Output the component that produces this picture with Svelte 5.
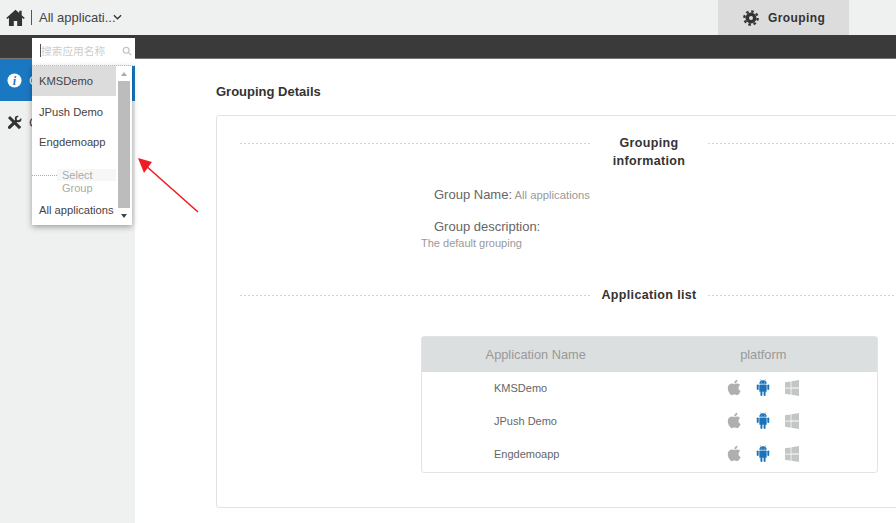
<script>
	const apps = ['KMSDemo', 'JPush Demo', 'Engdemoapp'];
</script>

{#snippet apple()}
	<svg class="pf" viewBox="3.5 3 16.5 18" fill="#aeb0b0"><path d="M17.05 20.28c-.98.95-2.05.8-3.08.35-1.09-.46-2.09-.48-3.24 0-1.44.62-2.2.44-3.06-.35C2.79 15.25 3.51 7.59 9.05 7.31c1.35.07 2.29.74 3.08.8 1.18-.24 2.31-.93 3.57-.84 1.51.12 2.65.72 3.4 1.8-3.12 1.87-2.38 5.98.48 7.13-.57 1.5-1.31 2.99-2.54 4.09zM12.03 7.25c-.15-2.23 1.66-4.07 3.74-4.25.29 2.58-2.34 4.5-3.74 4.25z" /></svg>
{/snippet}

{#snippet android()}
	<svg class="pf" viewBox="0 0 24 30" fill="#1a72bb">
		<path d="M5.5 8.5a6.5 6.5 0 0 1 13 0z" />
		<path d="M8.5 3 7.2.8M15.5 3 16.8.8" stroke="#1a72bb" stroke-width="1" />
		<rect x="5.5" y="9.5" width="13" height="13" rx="1" />
		<rect x="1" y="9.5" width="3.4" height="10" rx="1.7" />
		<rect x="19.6" y="9.5" width="3.4" height="10" rx="1.7" />
		<rect x="7.5" y="21" width="3.4" height="9" rx="1.7" />
		<rect x="13.1" y="21" width="3.4" height="9" rx="1.7" />
		<circle cx="9.5" cy="5.5" r=".8" fill="#fff" />
		<circle cx="14.5" cy="5.5" r=".8" fill="#fff" />
	</svg>
{/snippet}

{#snippet windows()}
	<svg class="pf win" viewBox="0 0 24 24" preserveAspectRatio="none" fill="#c4c6c6"><path d="M0 3.449 9.75 2.1v9.451H0m10.949-9.602L24 0v11.4H10.949M0 12.6h9.75v9.451L0 20.699M10.949 12.6H24V24l-12.95-1.801" /></svg>
{/snippet}

<div class="page">
	<header class="topbar">
		<svg class="home" viewBox="0 0 24 22" fill="#333"><path d="M12 1 0 11.6l1.3 1.5L3.5 11.3V22h6.3v-6.6h4.4V22h6.3V11.3l2.2 1.8 1.3-1.5-4-3.6V2.2h-3.2v3.1z" /></svg>
		<span class="sep"></span>
		<span class="appname">All applicati...</span>
		<svg class="chev" viewBox="0 0 10 6" fill="none" stroke="#333" stroke-width="1.4"><path d="M1 1l4 4 4-4" /></svg>
		<div class="tab">
			<svg class="gear" viewBox="0 0 24 24" fill="none" stroke="#333">
				<circle cx="12" cy="12" r="5.6" stroke-width="5.2" />
				<circle cx="12" cy="12" r="10" stroke-width="3.6" stroke-dasharray="3.9 3.95" />
			</svg>
			<span>Grouping</span>
		</div>
	</header>
	<div class="darkbar"></div>

	<div class="body">
		<aside class="side">
			<div class="navitem active">
				<svg class="navicon" viewBox="0 0 16 16"><circle cx="8" cy="8" r="7.5" fill="#fff" /><text x="8" y="12.4" text-anchor="middle" class="i">i</text></svg>
				<span>Grouping</span>
			</div>
			<div class="navitem">
				<svg class="navicon" viewBox="0 0 16 16" fill="#333">
					<path d="M1 3.2 3.2 1l12 11.8-2.4 2.4z" />
					<path d="M15 3.3 12.7 5.6 10.6 5.2 10.3 3.2 12.6 1C10.8.3 8.9 1 8.4 2.8 8.2 3.6 8.3 4.3 8.6 5L1.4 12.1a1.7 1.7 0 0 0 2.4 2.4L11 7.4c2.2.8 4.6-.6 4.4-3z" />
				</svg>
				<span>Configuration</span>
			</div>
		</aside>

		<main class="content">
			<h2>Grouping Details</h2>
			<section class="card">
				<div class="heading">
					<span class="dots"></span>
					<h3>Grouping information</h3>
					<span class="dots"></span>
				</div>
				<div class="info">
					<p class="line"><span class="label">Group Name:</span> <span class="val">All applications</span></p>
					<p class="line desc"><span class="label">Group description:</span></p>
					<p class="val default">The default grouping</p>
				</div>
				<div class="heading second">
					<span class="dots"></span>
					<h3>Application list</h3>
					<span class="dots"></span>
				</div>
				<div class="table">
					<div class="row head">
						<div>Application Name</div>
						<div>platform</div>
					</div>
					{#each apps as app}
						<div class="row">
							<div class="name">{app}</div>
							<div class="icons">
								{@render apple()}
								{@render android()}
								{@render windows()}
							</div>
						</div>
					{/each}
				</div>
			</section>
		</main>
	</div>

	<!-- dropdown opened over the sidebar -->
	<div class="dropdown">
		<div class="search">
			<span class="caret"></span>
			<span class="ph">搜索应用名称</span>
			<svg class="glass" viewBox="0 0 12 12" fill="none" stroke="#c4c4c4" stroke-width="1.5"><circle cx="5" cy="5" r="3.5" /><path d="M7.6 7.6 11 11" /></svg>
		</div>
		<div class="list">
			<div class="options">
				<div class="opt sel">KMSDemo</div>
				<div class="opt">JPush Demo</div>
				<div class="opt">Engdemoapp</div>
				<div class="group">
					<span class="gdots"></span>
					<span class="gname">Select Group</span>
				</div>
				<div class="opt last">All applications</div>
			</div>
			<div class="scroll">
				<span class="up"></span>
				<span class="thumb"></span>
				<span class="down"></span>
			</div>
		</div>
	</div>

	<svg class="arrow" viewBox="0 0 70 64" fill="#ee1c25">
		<path d="M63 57 10 10" stroke="#ee1c25" stroke-width="1.6" />
		<path d="M3 3 17 7 9 18z" />
	</svg>
</div>

<style>
	:global(body) {
		margin: 0;
		overflow: hidden;
	}

	.page {
		position: relative;
		width: 896px;
		height: 523px;
		overflow: hidden;
		background: #fff;
		font-family: "Liberation Sans", Arial, sans-serif;
		color: #333;
	}

	.topbar {
		display: flex;
		align-items: center;
		height: 35px;
		background: #eff0f0;
		padding-left: 6px;
		box-sizing: border-box;
	}

	.home {
		width: 19px;
		height: 17px;
	}

	.sep {
		width: 1px;
		height: 15px;
		background: #555;
		margin-left: 6px;
	}

	.appname {
		font-size: 13px;
		margin-left: 7px;
		width: 74px;
		white-space: nowrap;
		color: #444;
	}

	.chev {
		width: 9px;
		height: 6px;
		margin-top: -1px;
	}

	.tab {
		display: flex;
		align-items: center;
		gap: 9px;
		margin-left: 596px;
		width: 131px;
		height: 35px;
		padding-left: 25px;
		box-sizing: border-box;
		background: #dcdcdc;
		font-size: 12px;
		font-weight: bold;
		letter-spacing: 0.4px;
	}

	.gear {
		width: 16px;
		height: 16px;
	}

	.darkbar {
		height: 24px;
		background: #3a3a3a;
		border-bottom: 1px solid #777;
		box-sizing: border-box;
	}

	.body {
		display: flex;
		height: 464px;
	}

	.side {
		flex: none;
		width: 135px;
		background: #eff1f1;
	}

	.navitem {
		display: flex;
		align-items: center;
		gap: 7px;
		height: 42px;
		padding-left: 7px;
		font-size: 13px;
		white-space: nowrap;
		color: #444;
	}

	.navitem.active {
		background: #1a78c2;
		color: #fff;
	}

	.navicon {
		width: 15px;
		height: 15px;
	}

	.i {
		font-family: "Liberation Serif", serif;
		font-size: 13px;
		font-weight: bold;
		font-style: italic;
		fill: #1a78c2;
	}

	.content {
		flex: none;
		width: 866px;
		margin-left: 81px;
	}

	h2 {
		margin: 25px 0 16px;
		font-size: 13px;
		line-height: 15px;
		font-weight: bold;
		color: #333;
	}

	.card {
		height: 393px;
		box-sizing: border-box;
		border: 1px solid #e2e2e2;
		border-radius: 3px;
		padding: 18px 23px 0;
	}

	.heading {
		display: flex;
		align-items: flex-start;
	}

	.heading.second {
		margin-top: 36px;
	}

	.dots {
		flex: 1;
		height: 1px;
		margin-top: 9px;
		background: repeating-linear-gradient(90deg, #d4d4d4 0 2px, transparent 2px 4px);
	}

	h3 {
		flex: none;
		width: 118px;
		margin: 0;
		font-size: 12.5px;
		line-height: 18px;
		font-weight: bold;
		text-align: center;
		letter-spacing: 0.35px;
		color: #333;
	}

	.info {
		margin: 15px 0 0 181px;
	}

	p {
		margin: 0;
	}

	.line {
		margin-left: 13px;
		line-height: 18px;
	}

	.desc {
		margin-top: 13px;
	}

	.label {
		font-size: 13px;
		color: #666;
	}

	.val {
		font-size: 11.3px;
		color: #999;
		margin-left: -2px;
	}

	.default {
		font-size: 11px;
		line-height: 14px;
		margin: 0;
	}

	.table {
		width: 457px;
		margin: 32px 0 0 181px;
		padding-bottom: 1px;
		box-sizing: border-box;
		border: 1px solid #e2e4e4;
		border-radius: 3px;
	}

	.row {
		display: grid;
		grid-template-columns: 1fr 1fr;
		align-items: center;
		height: 33px;
		font-size: 11px;
		color: #666;
	}

	.row.head {
		height: 35px;
		background: #dcdfdf;
		font-size: 12.8px;
		color: #999;
		text-align: center;
	}

	.name {
		padding-left: 72px;
		margin-top: -1px;
	}

	.icons {
		display: flex;
		justify-content: center;
		gap: 15px;
		margin: -3px 0 0 -1px;
	}

	.pf {
		width: 14px;
		height: 17px;
	}

	.pf.win {
		height: 16px;
		margin-top: 1px;
	}

	.dropdown {
		position: absolute;
		left: 32px;
		top: 38px;
		width: 103px;
	}

	.search {
		display: flex;
		align-items: center;
		height: 28px;
		box-sizing: border-box;
		background: #fff;
		border-bottom: 1px dotted #ccc;
		padding: 0 3px 2px 8px;
	}

	.caret {
		width: 1px;
		height: 13px;
		background: #555;
	}

	.ph {
		font-family: "Noto Sans CJK SC", sans-serif;
		font-size: 10.7px;
		color: #ccc;
		white-space: nowrap;
	}

	.glass {
		width: 10px;
		height: 10px;
		margin-left: auto;
	}

	.list {
		display: flex;
		width: 100px;
		height: 159px;
		background: #fff;
		box-shadow: 0 2px 6px rgba(0, 0, 0, 0.35);
	}

	.options {
		flex: none;
		width: 84px;
		font-size: 11.2px;
		color: #444;
	}

	.opt {
		height: 30px;
		line-height: 30px;
		padding-left: 7px;
		white-space: nowrap;
	}

	.opt.sel {
		background: #dcdcdc;
		margin-bottom: 1px;
	}

	.opt.last {
		line-height: 28px;
		margin-top: -9px;
	}

	.group {
		display: flex;
		align-items: flex-start;
		height: 36px;
		margin-top: 12px;
	}

	.gdots {
		width: 25px;
		margin-top: 6px;
		border-top: 1px dotted #aaa;
		flex: none;
	}

	.gname {
		width: 56px;
		padding-left: 5px;
		font-size: 11px;
		line-height: 13px;
		color: #aaa;
		background: linear-gradient(#f6f8f8 12px, transparent 12px);
	}

	.scroll {
		display: flex;
		flex-direction: column;
		align-items: center;
		width: 16px;
		padding: 0 2px;
		box-sizing: border-box;
		background: #fff;
	}

	.thumb {
		flex: none;
		width: 12px;
		height: 127px;
		background: #bcbcbc;
	}

	.up,
	.down {
		width: 0;
		height: 0;
		border-left: 3.5px solid transparent;
		border-right: 3.5px solid transparent;
	}

	.up {
		border-bottom: 4px solid #aaa;
		margin: 6px 0 5px;
	}

	.down {
		border-top: 4px solid #444;
		margin-top: 6px;
	}

	.arrow {
		position: absolute;
		left: 135px;
		top: 155px;
		width: 70px;
		height: 64px;
	}
</style>
